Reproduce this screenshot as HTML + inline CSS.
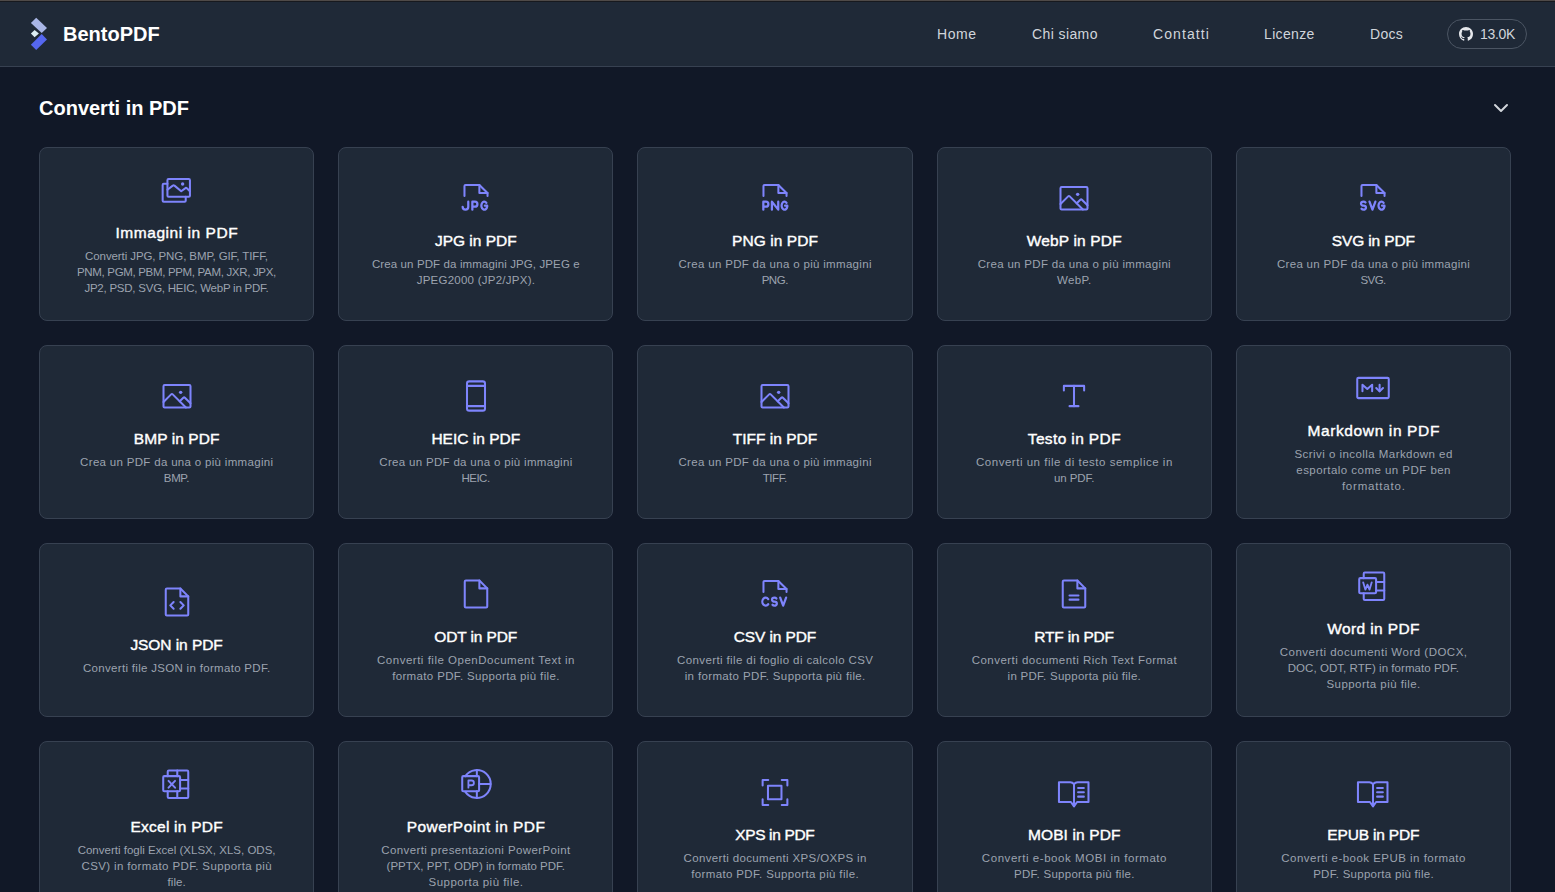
<!DOCTYPE html>
<html><head><meta charset="utf-8"><style>
*{box-sizing:border-box}
html,body{margin:0;padding:0}
body{width:1555px;height:892px;overflow:hidden;background:#111827;font-family:"Liberation Sans",sans-serif;position:relative}
.strip1{position:absolute;left:0;top:0;width:1555px;height:1px;background:#4f4a48}
.strip2{position:absolute;left:0;top:1px;width:1555px;height:1px;background:#17191e}
.hdr{position:absolute;left:0;top:2px;width:1555px;height:65px;background:#1f2937;border-bottom:1px solid #374151}
.brand{position:absolute;left:63px;top:20px;font-size:20px;font-weight:700;color:#fff;line-height:28px}
.nav{position:absolute;top:24px;font-size:14px;color:#d1d5db;line-height:20px}
.gh{position:absolute;left:1447px;top:19px;width:80px;height:30px;border:1px solid #4b5563;border-radius:15px}
.ght{position:absolute;left:1480px;top:24px;font-size:14px;letter-spacing:-0.3px;color:#d1d5db;line-height:20px}
.sec{position:absolute;left:39px;top:94px;font-size:20px;font-weight:700;color:#fff;line-height:28px}
.chev{position:absolute;left:1489px;top:96px;width:24px;height:24px}
.card{position:absolute;width:275.2px;height:174px;background:#1f2937;border:1px solid #374151;border-radius:8px;display:flex;align-items:center;justify-content:center}
.inner{display:flex;flex-direction:column;align-items:center;text-align:center}
.ic{width:36px;height:36px;color:#7e84fc;margin-bottom:12px;display:block}
.t{font-size:15.5px;font-weight:400;-webkit-text-stroke:0.4px #fff;color:#fff;line-height:24px;margin-bottom:4px;white-space:nowrap;position:relative;top:1px}
.d{font-size:11.5px;color:#9ca3af;line-height:16px;white-space:nowrap}
</style></head><body>
<div class="strip1"></div><div class="strip2"></div>
<div class="hdr"></div>
<svg style="position:absolute;left:28px;top:16px" width="22" height="36" viewBox="0 0 22 36">
 <path d="M8.2,1.8 L19,11.9 L13.7,17 L2.9,7.1 Z" fill="#a9b6e6"/>
 <path d="M6.6,13.9 L10.9,17.5 L6.6,21.3 L2.9,17.5 Z" fill="#dcedf3"/>
 <path d="M13.7,18 L19,23.5 L8.2,33.9 L2.9,28.8 Z" fill="#5567ef"/>
</svg>
<div class="brand">BentoPDF</div>
<div class="nav" style="left:937px;letter-spacing:0.55px">Home</div>
<div class="nav" style="left:1032px;letter-spacing:0.4px">Chi siamo</div>
<div class="nav" style="left:1153px;letter-spacing:1.1px">Contatti</div>
<div class="nav" style="left:1264px;letter-spacing:0.35px">Licenze</div>
<div class="nav" style="left:1370px;letter-spacing:0.3px">Docs</div>
<div class="gh"></div>
<svg style="position:absolute;left:1459px;top:27px" width="14" height="14" viewBox="0 0 16 16"><path fill="#e5e7eb" d="M8 0C3.58 0 0 3.58 0 8c0 3.54 2.29 6.53 5.47 7.59.4.07.55-.17.55-.38 0-.19-.01-.82-.01-1.49-2.01.37-2.53-.49-2.69-.94-.09-.23-.48-.94-.82-1.13-.28-.15-.68-.52-.01-.53.63-.01 1.08.58 1.23.82.72 1.21 1.87.87 2.33.66.07-.52.28-.87.51-1.07-1.78-.2-3.64-.89-3.64-3.95 0-.87.31-1.59.82-2.15-.08-.2-.36-1.02.08-2.12 0 0 .67-.21 2.2.82.64-.18 1.32-.27 2-.27.68 0 1.36.09 2 .27 1.53-1.04 2.2-.82 2.2-.82.44 1.1.16 1.92.08 2.12.51.56.82 1.27.82 2.15 0 3.07-1.87 3.75-3.65 3.95.29.25.54.73.54 1.48 0 1.07-.01 1.93-.01 2.2 0 .21.15.46.55.38A8.013 8.013 0 0016 8c0-4.42-3.58-8-8-8z"/></svg>
<div class="ght">13.0K</div>
<div class="sec">Converti in PDF</div>
<svg class="chev" viewBox="0 0 24 24" fill="none" stroke="#d1d5db" stroke-width="2" stroke-linecap="round" stroke-linejoin="round"><path d="m6 9 6 6 6-6"/></svg>
<div class="card" style="left:39.0px;top:147px"><div class="inner"><svg class="ic" viewBox="0 0 256 256"><rect x="60" y="50" width="160" height="126" rx="8" fill="none" stroke="currentColor" stroke-linecap="round" stroke-linejoin="round" stroke-width="14.5"/><path d="M190,176v28a8,8,0,0,1-8,8H34a8,8,0,0,1-8-8V92a8,8,0,0,1,8-8H60" fill="none" stroke="currentColor" stroke-linecap="round" stroke-linejoin="round" stroke-width="14.5" /><circle cx="168" cy="85" r="12" fill="currentColor"/><path d="M60,126L98,97a9,9,0,0,1,12,0L158,137L186,116a9,9,0,0,1,12,0L220,137" fill="none" stroke="currentColor" stroke-linecap="round" stroke-linejoin="round" stroke-width="14.5" /></svg><div class="t" style="letter-spacing:0.537px;text-indent:0.537px">Immagini in PDF</div><div class="d"><div style="letter-spacing:-0.097px;text-indent:-0.097px">Converti JPG, PNG, BMP, GIF, TIFF,</div><div style="letter-spacing:-0.328px;text-indent:-0.328px">PNM, PGM, PBM, PPM, PAM, JXR, JPX,</div><div style="letter-spacing:-0.236px;text-indent:-0.236px">JP2, PSD, SVG, HEIC, WebP in PDF.</div></div></div></div><div class="card" style="left:338.2px;top:147px"><div class="inner"><svg class="ic" viewBox="0 0 256 256"><path d="M46,113V43a8,8,0,0,1,8-8h98l58,58v20" fill="none" stroke="currentColor" stroke-linecap="round" stroke-linejoin="round" stroke-width="14.5" /><path d="M152,35V93h58" fill="none" stroke="currentColor" stroke-linecap="round" stroke-linejoin="round" stroke-width="14.5" /><path d="M73,154V191.0A20.0,20.0,0,0,1,33,191.0" fill="none" stroke="currentColor" stroke-linecap="round" stroke-linejoin="round"  stroke-width="16"/><path d="M102,211V154H120.0A18.0,18.0,0,0,1,120.0,190H102" fill="none" stroke="currentColor" stroke-linecap="round" stroke-linejoin="round"  stroke-width="16"/><path d="M201.8,162.3A21.0,28.5,0,1,0,207.5,188.4V182.5H191.0" fill="none" stroke="currentColor" stroke-linecap="round" stroke-linejoin="round"  stroke-width="16"/></svg><div class="t" style="letter-spacing:-0.006px;text-indent:-0.006px">JPG in PDF</div><div class="d"><div style="letter-spacing:0.115px;text-indent:0.115px">Crea un PDF da immagini JPG, JPEG e</div><div style="letter-spacing:0.251px;text-indent:0.251px">JPEG2000 (JP2/JPX).</div></div></div></div><div class="card" style="left:637.4px;top:147px"><div class="inner"><svg class="ic" viewBox="0 0 256 256"><path d="M46,113V43a8,8,0,0,1,8-8h98l58,58v20" fill="none" stroke="currentColor" stroke-linecap="round" stroke-linejoin="round" stroke-width="14.5" /><path d="M152,35V93h58" fill="none" stroke="currentColor" stroke-linecap="round" stroke-linejoin="round" stroke-width="14.5" /><path d="M45,211V154H63.0A18.0,18.0,0,0,1,63.0,190H45" fill="none" stroke="currentColor" stroke-linecap="round" stroke-linejoin="round"  stroke-width="16"/><path d="M106,211V154L151,211V154" fill="none" stroke="currentColor" stroke-linecap="round" stroke-linejoin="round"  stroke-width="16"/><path d="M210.0,162.3A20.5,28.5,0,1,0,215.6,188.4V182.5H199.5" fill="none" stroke="currentColor" stroke-linecap="round" stroke-linejoin="round"  stroke-width="16"/></svg><div class="t" style="letter-spacing:0.078px;text-indent:0.078px">PNG in PDF</div><div class="d"><div style="letter-spacing:0.317px;text-indent:0.317px">Crea un PDF da una o più immagini</div><div style="letter-spacing:-0.473px;text-indent:-0.473px">PNG.</div></div></div></div><div class="card" style="left:936.6px;top:147px"><div class="inner"><svg class="ic" viewBox="0 0 256 256"><rect x="32" y="50" width="192" height="160" rx="8" fill="none" stroke="currentColor" stroke-linecap="round" stroke-linejoin="round" stroke-width="14.5"/><circle cx="154" cy="102" r="12" fill="currentColor"/><path d="M147.31,166,173,140.34a8,8,0,0,1,11.31,0L224,180.06" fill="none" stroke="currentColor" stroke-linecap="round" stroke-linejoin="round" stroke-width="14.5" /><path d="M32,170.69l54.34-54.35a8,8,0,0,1,11.32,0L191.31,210" fill="none" stroke="currentColor" stroke-linecap="round" stroke-linejoin="round" stroke-width="14.5" /></svg><div class="t" style="letter-spacing:0.156px;text-indent:0.156px">WebP in PDF</div><div class="d"><div style="letter-spacing:0.317px;text-indent:0.317px">Crea un PDF da una o più immagini</div><div style="letter-spacing:0.344px;text-indent:0.344px">WebP.</div></div></div></div><div class="card" style="left:1235.8px;top:147px"><div class="inner"><svg class="ic" viewBox="0 0 256 256"><path d="M46,113V43a8,8,0,0,1,8-8h98l58,58v20" fill="none" stroke="currentColor" stroke-linecap="round" stroke-linejoin="round" stroke-width="14.5" /><path d="M152,35V93h58" fill="none" stroke="currentColor" stroke-linecap="round" stroke-linejoin="round" stroke-width="14.5" /><path d="M74.8,160.1A17.5,14.2,0,0,0,60.5,154A17.5,14.2,0,0,0,60.5,182.5A17.5,14.2,0,0,1,60.5,211A17.5,14.2,0,0,1,46.2,204.9" fill="none" stroke="currentColor" stroke-linecap="round" stroke-linejoin="round"  stroke-width="16"/><path d="M103,154L124.0,211L145,154" fill="none" stroke="currentColor" stroke-linecap="round" stroke-linejoin="round"  stroke-width="16"/><path d="M203.7,162.3A21.5,28.5,0,1,0,209.5,188.4V182.5H192.5" fill="none" stroke="currentColor" stroke-linecap="round" stroke-linejoin="round"  stroke-width="16"/></svg><div class="t" style="letter-spacing:-0.138px;text-indent:-0.138px">SVG in PDF</div><div class="d"><div style="letter-spacing:0.317px;text-indent:0.317px">Crea un PDF da una o più immagini</div><div style="letter-spacing:-0.562px;text-indent:-0.562px">SVG.</div></div></div></div><div class="card" style="left:39.0px;top:345px"><div class="inner"><svg class="ic" viewBox="0 0 256 256"><rect x="32" y="50" width="192" height="160" rx="8" fill="none" stroke="currentColor" stroke-linecap="round" stroke-linejoin="round" stroke-width="14.5"/><circle cx="154" cy="102" r="12" fill="currentColor"/><path d="M147.31,166,173,140.34a8,8,0,0,1,11.31,0L224,180.06" fill="none" stroke="currentColor" stroke-linecap="round" stroke-linejoin="round" stroke-width="14.5" /><path d="M32,170.69l54.34-54.35a8,8,0,0,1,11.32,0L191.31,210" fill="none" stroke="currentColor" stroke-linecap="round" stroke-linejoin="round" stroke-width="14.5" /></svg><div class="t" style="letter-spacing:0.078px;text-indent:0.078px">BMP in PDF</div><div class="d"><div style="letter-spacing:0.317px;text-indent:0.317px">Crea un PDF da una o più immagini</div><div style="letter-spacing:-0.379px;text-indent:-0.379px">BMP.</div></div></div></div><div class="card" style="left:338.2px;top:345px"><div class="inner"><svg class="ic" viewBox="0 0 256 256"><rect x="64" y="24" width="128" height="208" rx="16" fill="none" stroke="currentColor" stroke-linecap="round" stroke-linejoin="round" stroke-width="14.5"/><path d="M64,56H192" fill="none" stroke="currentColor" stroke-linecap="round" stroke-linejoin="round" stroke-width="14.5" /><path d="M64,200H192" fill="none" stroke="currentColor" stroke-linecap="round" stroke-linejoin="round" stroke-width="14.5" /></svg><div class="t" style="letter-spacing:0.006px;text-indent:0.006px">HEIC in PDF</div><div class="d"><div style="letter-spacing:0.317px;text-indent:0.317px">Crea un PDF da una o più immagini</div><div style="letter-spacing:-0.519px;text-indent:-0.519px">HEIC.</div></div></div></div><div class="card" style="left:637.4px;top:345px"><div class="inner"><svg class="ic" viewBox="0 0 256 256"><rect x="32" y="50" width="192" height="160" rx="8" fill="none" stroke="currentColor" stroke-linecap="round" stroke-linejoin="round" stroke-width="14.5"/><circle cx="154" cy="102" r="12" fill="currentColor"/><path d="M147.31,166,173,140.34a8,8,0,0,1,11.31,0L224,180.06" fill="none" stroke="currentColor" stroke-linecap="round" stroke-linejoin="round" stroke-width="14.5" /><path d="M32,170.69l54.34-54.35a8,8,0,0,1,11.32,0L191.31,210" fill="none" stroke="currentColor" stroke-linecap="round" stroke-linejoin="round" stroke-width="14.5" /></svg><div class="t" style="letter-spacing:0.006px;text-indent:0.006px">TIFF in PDF</div><div class="d"><div style="letter-spacing:0.317px;text-indent:0.317px">Crea un PDF da una o più immagini</div><div style="letter-spacing:-0.450px;text-indent:-0.450px">TIFF.</div></div></div></div><div class="card" style="left:936.6px;top:345px"><div class="inner"><svg class="ic" viewBox="0 0 256 256"><path d="M56,88V56H200V88" fill="none" stroke="currentColor" stroke-linecap="round" stroke-linejoin="round" stroke-width="14.5" /><path d="M128,56V200" fill="none" stroke="currentColor" stroke-linecap="round" stroke-linejoin="round" stroke-width="14.5" /><path d="M96,200H160" fill="none" stroke="currentColor" stroke-linecap="round" stroke-linejoin="round" stroke-width="14.5" /></svg><div class="t" style="letter-spacing:0.377px;text-indent:0.377px">Testo in PDF</div><div class="d"><div style="letter-spacing:0.517px;text-indent:0.517px">Converti un file di testo semplice in</div><div style="letter-spacing:-0.069px;text-indent:-0.069px">un PDF.</div></div></div></div><div class="card" style="left:1235.8px;top:345px"><div class="inner"><svg class="ic" viewBox="0 0 256 256"><rect x="16" y="56" width="224" height="144" rx="8" fill="none" stroke="currentColor" stroke-linecap="round" stroke-linejoin="round" stroke-width="14.5"/><path d="M53,151V105L87.5,135L122,105V151" fill="none" stroke="currentColor" stroke-linecap="round" stroke-linejoin="round" stroke-width="14.5" /><path d="M175,105V151" fill="none" stroke="currentColor" stroke-linecap="round" stroke-linejoin="round" stroke-width="14.5" /><path d="M151,128L175,152L199,128" fill="none" stroke="currentColor" stroke-linecap="round" stroke-linejoin="round" stroke-width="14.5" /></svg><div class="t" style="letter-spacing:0.628px;text-indent:0.628px">Markdown in PDF</div><div class="d"><div style="letter-spacing:0.447px;text-indent:0.447px">Scrivi o incolla Markdown ed</div><div style="letter-spacing:0.459px;text-indent:0.459px">esportalo come un PDF ben</div><div style="letter-spacing:0.803px;text-indent:0.803px">formattato.</div></div></div></div><div class="card" style="left:39.0px;top:543px"><div class="inner"><svg class="ic" viewBox="0 0 256 256"><path d="M200,224H56a8,8,0,0,1-8-8V40a8,8,0,0,1,8-8h96l56,56V216A8,8,0,0,1,200,224Z" fill="none" stroke="currentColor" stroke-linecap="round" stroke-linejoin="round" stroke-width="14.5" /><path d="M152,32V88h56" fill="none" stroke="currentColor" stroke-linecap="round" stroke-linejoin="round" stroke-width="14.5" /><path d="M104,128 80,152 104,176" fill="none" stroke="currentColor" stroke-linecap="round" stroke-linejoin="round" stroke-width="14.5" /><path d="M152,128 176,152 152,176" fill="none" stroke="currentColor" stroke-linecap="round" stroke-linejoin="round" stroke-width="14.5" /></svg><div class="t" style="letter-spacing:-0.065px;text-indent:-0.065px">JSON in PDF</div><div class="d"><div style="letter-spacing:0.311px;text-indent:0.311px">Converti file JSON in formato PDF.</div></div></div></div><div class="card" style="left:338.2px;top:543px"><div class="inner"><svg class="ic" viewBox="0 0 256 256"><path d="M200,224H56a8,8,0,0,1-8-8V40a8,8,0,0,1,8-8h96l56,56V216A8,8,0,0,1,200,224Z" fill="none" stroke="currentColor" stroke-linecap="round" stroke-linejoin="round" stroke-width="14.5" /><path d="M152,32V88h56" fill="none" stroke="currentColor" stroke-linecap="round" stroke-linejoin="round" stroke-width="14.5" /></svg><div class="t" style="letter-spacing:-0.136px;text-indent:-0.136px">ODT in PDF</div><div class="d"><div style="letter-spacing:0.509px;text-indent:0.509px">Converti file OpenDocument Text in</div><div style="letter-spacing:0.356px;text-indent:0.356px">formato PDF. Supporta più file.</div></div></div></div><div class="card" style="left:637.4px;top:543px"><div class="inner"><svg class="ic" viewBox="0 0 256 256"><path d="M46,113V43a8,8,0,0,1,8-8h98l58,58v20" fill="none" stroke="currentColor" stroke-linecap="round" stroke-linejoin="round" stroke-width="14.5" /><path d="M152,35V93h58" fill="none" stroke="currentColor" stroke-linecap="round" stroke-linejoin="round" stroke-width="14.5" /><path d="M79.5,164.2A23.5,28.5,0,1,0,79.5,200.8" fill="none" stroke="currentColor" stroke-linecap="round" stroke-linejoin="round"  stroke-width="16"/><path d="M137.9,160.1A17.0,14.2,0,0,0,124.0,154A17.0,14.2,0,0,0,124.0,182.5A17.0,14.2,0,0,1,124.0,211A17.0,14.2,0,0,1,110.1,204.9" fill="none" stroke="currentColor" stroke-linecap="round" stroke-linejoin="round"  stroke-width="16"/><path d="M165,154L186.0,211L207,154" fill="none" stroke="currentColor" stroke-linecap="round" stroke-linejoin="round"  stroke-width="16"/></svg><div class="t" style="letter-spacing:-0.098px;text-indent:-0.098px">CSV in PDF</div><div class="d"><div style="letter-spacing:0.390px;text-indent:0.390px">Converti file di foglio di calcolo CSV</div><div style="letter-spacing:0.359px;text-indent:0.359px">in formato PDF. Supporta più file.</div></div></div></div><div class="card" style="left:936.6px;top:543px"><div class="inner"><svg class="ic" viewBox="0 0 256 256"><path d="M200,224H56a8,8,0,0,1-8-8V40a8,8,0,0,1,8-8h96l56,56V216A8,8,0,0,1,200,224Z" fill="none" stroke="currentColor" stroke-linecap="round" stroke-linejoin="round" stroke-width="14.5" /><path d="M152,32V88h56" fill="none" stroke="currentColor" stroke-linecap="round" stroke-linejoin="round" stroke-width="14.5" /><path d="M96,138H160" fill="none" stroke="currentColor" stroke-linecap="round" stroke-linejoin="round" stroke-width="14.5" /><path d="M96,168H160" fill="none" stroke="currentColor" stroke-linecap="round" stroke-linejoin="round" stroke-width="14.5" /></svg><div class="t" style="letter-spacing:-0.195px;text-indent:-0.195px">RTF in PDF</div><div class="d"><div style="letter-spacing:0.471px;text-indent:0.471px">Converti documenti Rich Text Format</div><div style="letter-spacing:0.265px;text-indent:0.265px">in PDF. Supporta più file.</div></div></div></div><div class="card" style="left:1235.8px;top:543px"><div class="inner"><svg class="ic" viewBox="0 0 256 256"><path d="M62,72V40a8,8,0,0,1,8-8H200a8,8,0,0,1,8,8V220a8,8,0,0,1-8,8H70a8,8,0,0,1-8-8V180" fill="none" stroke="currentColor" stroke-linecap="round" stroke-linejoin="round" stroke-width="14.5" /><rect x="30" y="72" width="120" height="108" rx="8" fill="none" stroke="currentColor" stroke-linecap="round" stroke-linejoin="round" stroke-width="14.5"/><path d="M150,100H208" fill="none" stroke="currentColor" stroke-linecap="round" stroke-linejoin="round" stroke-width="14.5" /><path d="M150,160H208" fill="none" stroke="currentColor" stroke-linecap="round" stroke-linejoin="round" stroke-width="14.5" /><path d="M58,102L74,154L88.5,118L103,154L119,102" fill="none" stroke="currentColor" stroke-linecap="round" stroke-linejoin="round"  stroke-width="13"/></svg><div class="t" style="letter-spacing:0.364px;text-indent:0.364px">Word in PDF</div><div class="d"><div style="letter-spacing:0.494px;text-indent:0.494px">Converti documenti Word (DOCX,</div><div style="letter-spacing:0.050px;text-indent:0.050px">DOC, ODT, RTF) in formato PDF.</div><div style="letter-spacing:0.446px;text-indent:0.446px">Supporta più file.</div></div></div></div><div class="card" style="left:39.0px;top:741px"><div class="inner"><svg class="ic" viewBox="0 0 256 256"><path d="M62,72V40a8,8,0,0,1,8-8H200a8,8,0,0,1,8,8V220a8,8,0,0,1-8,8H70a8,8,0,0,1-8-8V180" fill="none" stroke="currentColor" stroke-linecap="round" stroke-linejoin="round" stroke-width="14.5" /><rect x="30" y="72" width="120" height="108" rx="8" fill="none" stroke="currentColor" stroke-linecap="round" stroke-linejoin="round" stroke-width="14.5"/><path d="M150,100H208" fill="none" stroke="currentColor" stroke-linecap="round" stroke-linejoin="round" stroke-width="14.5" /><path d="M150,160H208" fill="none" stroke="currentColor" stroke-linecap="round" stroke-linejoin="round" stroke-width="14.5" /><path d="M130,32V72" fill="none" stroke="currentColor" stroke-linecap="round" stroke-linejoin="round" stroke-width="14.5" /><path d="M130,180V228" fill="none" stroke="currentColor" stroke-linecap="round" stroke-linejoin="round" stroke-width="14.5" /><path d="M68,106L114,154" fill="none" stroke="currentColor" stroke-linecap="round" stroke-linejoin="round" stroke-width="14.5" /><path d="M114,106L68,154" fill="none" stroke="currentColor" stroke-linecap="round" stroke-linejoin="round" stroke-width="14.5" /></svg><div class="t" style="letter-spacing:0.235px;text-indent:0.235px">Excel in PDF</div><div class="d"><div style="letter-spacing:0.011px;text-indent:0.011px">Converti fogli Excel (XLSX, XLS, ODS,</div><div style="letter-spacing:0.368px;text-indent:0.368px">CSV) in formato PDF. Supporta più</div><div style="letter-spacing:0.075px;text-indent:0.075px">file.</div></div></div></div><div class="card" style="left:338.2px;top:741px"><div class="inner"><svg class="ic" viewBox="0 0 256 256"><path d="M52,72A99,99,0,1,1,52,184" fill="none" stroke="currentColor" stroke-linecap="round" stroke-linejoin="round" stroke-width="14.5" /><rect x="30" y="72" width="120" height="108" rx="8" fill="none" stroke="currentColor" stroke-linecap="round" stroke-linejoin="round" stroke-width="14.5"/><path d="M150,128H231" fill="none" stroke="currentColor" stroke-linecap="round" stroke-linejoin="round" stroke-width="14.5" /><path d="M134,29V72" fill="none" stroke="currentColor" stroke-linecap="round" stroke-linejoin="round" stroke-width="14.5" /><path d="M134,180V227" fill="none" stroke="currentColor" stroke-linecap="round" stroke-linejoin="round" stroke-width="14.5" /><path d="M74,154V103H96a17,17,0,0,1,0,34H74" fill="none" stroke="currentColor" stroke-linecap="round" stroke-linejoin="round"  stroke-width="13"/></svg><div class="t" style="letter-spacing:0.458px;text-indent:0.458px">PowerPoint in PDF</div><div class="d"><div style="letter-spacing:0.390px;text-indent:0.390px">Converti presentazioni PowerPoint</div><div style="letter-spacing:-0.020px;text-indent:-0.020px">(PPTX, PPT, ODP) in formato PDF.</div><div style="letter-spacing:0.482px;text-indent:0.482px">Supporta più file.</div></div></div></div><div class="card" style="left:637.4px;top:741px"><div class="inner"><svg class="ic" viewBox="0 0 256 256"><path d="M40,82V42H80" fill="none" stroke="currentColor" stroke-linecap="round" stroke-linejoin="round" stroke-width="14.5" /><path d="M176,42H216V82" fill="none" stroke="currentColor" stroke-linecap="round" stroke-linejoin="round" stroke-width="14.5" /><path d="M216,180V220H176" fill="none" stroke="currentColor" stroke-linecap="round" stroke-linejoin="round" stroke-width="14.5" /><path d="M80,220H40V180" fill="none" stroke="currentColor" stroke-linecap="round" stroke-linejoin="round" stroke-width="14.5" /><rect x="78" y="83" width="96" height="96" fill="none" stroke="currentColor" stroke-linecap="round" stroke-linejoin="round" stroke-width="14.5"/></svg><div class="t" style="letter-spacing:-0.336px;text-indent:-0.336px">XPS in PDF</div><div class="d"><div style="letter-spacing:0.356px;text-indent:0.356px">Converti documenti XPS/OXPS in</div><div style="letter-spacing:0.363px;text-indent:0.363px">formato PDF. Supporta più file.</div></div></div></div><div class="card" style="left:936.6px;top:741px"><div class="inner"><svg class="ic" viewBox="0 0 256 256"><path d="M128,72C120,62,112,58,102,58H21V199H106L128,230L150,199H231V58H154C144,58,136,62,128,72V222" fill="none" stroke="currentColor" stroke-linecap="round" stroke-linejoin="round" stroke-width="14.5" /><path d="M157,99H198" fill="none" stroke="currentColor" stroke-linecap="round" stroke-linejoin="round" stroke-width="14.5" /><path d="M157,130H198" fill="none" stroke="currentColor" stroke-linecap="round" stroke-linejoin="round" stroke-width="14.5" /><path d="M157,161H198" fill="none" stroke="currentColor" stroke-linecap="round" stroke-linejoin="round" stroke-width="14.5" /></svg><div class="t" style="letter-spacing:0.118px;text-indent:0.118px">MOBI in PDF</div><div class="d"><div style="letter-spacing:0.553px;text-indent:0.553px">Converti e-book MOBI in formato</div><div style="letter-spacing:0.272px;text-indent:0.272px">PDF. Supporta più file.</div></div></div></div><div class="card" style="left:1235.8px;top:741px"><div class="inner"><svg class="ic" viewBox="0 0 256 256"><path d="M128,72C120,62,112,58,102,58H21V199H106L128,230L150,199H231V58H154C144,58,136,62,128,72V222" fill="none" stroke="currentColor" stroke-linecap="round" stroke-linejoin="round" stroke-width="14.5" /><path d="M157,99H198" fill="none" stroke="currentColor" stroke-linecap="round" stroke-linejoin="round" stroke-width="14.5" /><path d="M157,130H198" fill="none" stroke="currentColor" stroke-linecap="round" stroke-linejoin="round" stroke-width="14.5" /><path d="M157,161H198" fill="none" stroke="currentColor" stroke-linecap="round" stroke-linejoin="round" stroke-width="14.5" /></svg><div class="t" style="letter-spacing:-0.172px;text-indent:-0.172px">EPUB in PDF</div><div class="d"><div style="letter-spacing:0.469px;text-indent:0.469px">Converti e-book EPUB in formato</div><div style="letter-spacing:0.272px;text-indent:0.272px">PDF. Supporta più file.</div></div></div></div>
</body></html>
